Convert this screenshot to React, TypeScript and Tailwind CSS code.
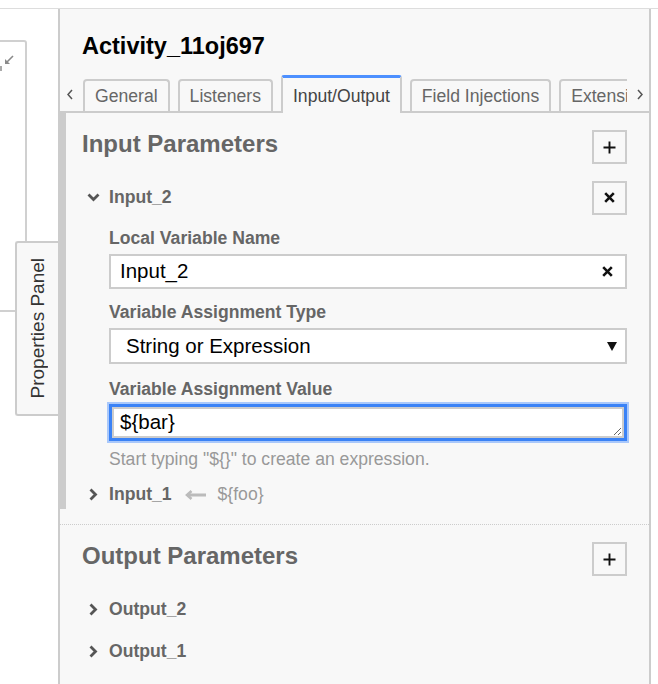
import React from "react";

const tabs = [
  { label: "General" },
  { label: "Listeners" },
  { label: "Input/Output", active: true },
  { label: "Field Injections" },
  { label: "Extensions" },
];

function ChevronDown() {
  return (
    <svg width="13" height="9" viewBox="0 0 13 9" fill="none">
      <polyline points="1.5,1.5 6.5,6.5 11.5,1.5" stroke="#555" strokeWidth="2.8" />
    </svg>
  );
}

function ChevronRight() {
  return (
    <svg width="9" height="13" viewBox="0 0 9 13" fill="none">
      <polyline points="1.5,1.5 6.5,6.5 1.5,11.5" stroke="#555" strokeWidth="2.8" />
    </svg>
  );
}

function CrossIcon() {
  return (
    <svg width="11" height="11" viewBox="0 0 11 11" fill="none">
      <path d="M1.2 1.2 L9.8 9.8 M9.8 1.2 L1.2 9.8" stroke="#111" strokeWidth="2.6" />
    </svg>
  );
}

function PlusIcon() {
  return (
    <svg width="13" height="13" viewBox="0 0 13 13" fill="none">
      <path d="M6.5 0.5 V12.5 M0.5 6.5 H12.5" stroke="#111" strokeWidth="1.9" />
    </svg>
  );
}

function SquareButton({ children }: { children: React.ReactNode }) {
  return (
    <button
      type="button"
      className="flex h-[34px] w-[35px] shrink-0 items-center justify-center border-2 border-[#ccc] bg-[#f8f8f8]"
    >
      {children}
    </button>
  );
}

function Tab({ label, active }: { label: string; active?: boolean }) {
  if (active) {
    return (
      <div className="relative z-10 -mb-[2px] h-[38px] shrink-0 whitespace-nowrap rounded-t-[3px] border-x-2 border-t-[3px] border-x-[#ccc] border-t-[#4d90ff] bg-[#f8f8f8] px-[10px] pt-[3px] text-[17.6px] leading-[30px] text-[#444]">
        {label}
      </div>
    );
  }
  return (
    <div className="h-[32px] shrink-0 whitespace-nowrap rounded-t-[4px] border-x-2 border-t-2 border-[#ccc] px-[10px] text-[17.6px] leading-[30px] text-[#666]">
      {label}
    </div>
  );
}

function FieldLabel({ children, className = "" }: { children: React.ReactNode; className?: string }) {
  return (
    <div className={`text-[17.6px] font-bold leading-[22px] text-[#666] ${className}`}>{children}</div>
  );
}

function CollapsedRow({ name, mapping }: { name: string; mapping?: string }) {
  return (
    <div className="flex h-[35px] items-center">
      <div className="w-[27px] pl-[7px]">
        <ChevronRight />
      </div>
      <span className="text-[17.6px] font-bold text-[#666]">{name}</span>
      {mapping && (
        <>
          <svg className="ml-[13px]" width="21" height="10" viewBox="0 0 21 10" fill="none">
            <path d="M3 5 H21" stroke="#bbb" strokeWidth="3" />
            <polyline points="6.5,1 2,5 6.5,9" stroke="#bbb" strokeWidth="2.6" />
          </svg>
          <span className="ml-[12px] text-[17.6px] text-[#999]">{mapping}</span>
        </>
      )}
    </div>
  );
}

export default function App() {
  return (
    <div className="h-[684px] w-[658px] overflow-hidden bg-white pt-[8px] font-['Liberation_Sans',Arial,sans-serif]">
      <div className="flex h-[676px] border-t border-[#ddd]">
        {/* diagram canvas edge */}
        <div className="relative w-[58px] shrink-0">
          <div className="absolute left-[-10px] top-[31px] h-[272px] w-[37px] rounded-tr-[3px] border-2 border-[#d0d0d0]" />
          <svg className="absolute left-[4px] top-[46px]" width="10" height="10" viewBox="0 0 10 10" fill="none">
            <path d="M9 1 L2.5 7.5" stroke="#8a8a8a" strokeWidth="1.6" />
            <polygon points="1,4 1,9 6,9" fill="#8a8a8a" />
          </svg>
          <div className="absolute left-0 top-[57px] h-[5px] w-[2px] bg-[#aaa]" />
          <div className="absolute left-[15px] top-[232px] flex h-[175px] w-[43px] items-center justify-center rounded-l-[3px] border-y-2 border-l-2 border-[#ccc] bg-[#f8f8f8]">
            <span className="rotate-180 whitespace-nowrap text-[19px] leading-[22px] text-[#333] [writing-mode:vertical-rl]">
              Properties Panel
            </span>
          </div>
        </div>

        {/* properties panel */}
        <div className="w-[593px] shrink-0 border-x-2 border-[#ccc] bg-[#f8f8f8]">
          <div className="pl-[22px] pt-[23px] text-[23.5px] font-bold leading-[28px] text-black">
            Activity_11oj697
          </div>

          <div className="mt-[15px] flex h-[38px] border-b-2 border-[#ccc]">
            <div className="w-[23px] shrink-0 pl-[7px] pt-[14px]">
              <svg width="6" height="11" viewBox="0 0 6 11" fill="none">
                <polyline points="5,1 1,5.5 5,10" stroke="#555" strokeWidth="1.5" />
              </svg>
            </div>
            <div className="flex w-[544px] shrink-0 items-end gap-[8px] overflow-x-clip">
              {tabs.map((t) => (
                <Tab key={t.label} label={t.label} active={t.active} />
              ))}
            </div>
            <div className="flex-1 pl-[10px] pt-[14px]">
              <svg width="6" height="11" viewBox="0 0 6 11" fill="none">
                <polyline points="1,1 5,5.5 1,10" stroke="#555" strokeWidth="1.5" />
              </svg>
            </div>
          </div>

          {/* input parameters */}
          <div className="relative border-b border-dotted border-[#ccc] px-[22px] pb-[12px] pt-[17px]">
            <div className="absolute bottom-[15px] left-0 top-0 w-[6px] bg-[#ccc]" />
            <div className="flex items-start justify-between">
              <div className="text-[24px] font-bold leading-[28px] text-[#666]">Input Parameters</div>
              <SquareButton>
                <PlusIcon />
              </SquareButton>
            </div>

            <div className="mt-[16px] flex h-[35px] items-center">
              <div className="w-[27px] pl-[5px]">
                <ChevronDown />
              </div>
              <span className="text-[17.6px] font-bold text-[#666]">Input_2</span>
              <div className="ml-auto">
                <SquareButton>
                  <CrossIcon />
                </SquareButton>
              </div>
            </div>

            <div className="pl-[27px]">
              <FieldLabel className="mt-[12px]">Local Variable Name</FieldLabel>
              <div className="mt-[5px] flex h-[35px] items-center justify-between border-2 border-[#ccc] bg-white pl-[9px] pr-[12px] text-[20.5px] text-black">
                <span>Input_2</span>
                <CrossIcon />
              </div>

              <FieldLabel className="mt-[12px]">Variable Assignment Type</FieldLabel>
              <div className="mt-[5px] flex h-[36px] items-center justify-between border-2 border-[#ccc] bg-white pl-[15px] pr-[8px] text-[20.5px] text-black">
                <span>String or Expression</span>
                <svg width="10" height="9" viewBox="0 0 10 9">
                  <polygon points="0,0 10,0 5,9" fill="#111" />
                </svg>
              </div>

              <FieldLabel className="mt-[14px]">Variable Assignment Value</FieldLabel>
              <textarea
                readOnly
                defaultValue="${bar}"
                className="mx-[3px] mt-[7px] block h-[31px] w-[512px] border-2 border-[#ccc] bg-white pl-[6px] pt-[2px] text-[20.5px] leading-[22px] text-black shadow-[0_0_0_3px_#3a82f6,0_0_0_5px_#a9c8fb] outline-none"
              />
              <div className="mt-[10px] text-[17.6px] leading-[22px] text-[#999]">
                Start typing "{"${}"}" to create an expression.
              </div>
            </div>

            <div className="mt-[7px]">
              <CollapsedRow name="Input_1" mapping="${foo}" />
            </div>
          </div>

          {/* output parameters */}
          <div className="px-[22px] pt-[17px]">
            <div className="flex items-start justify-between">
              <div className="text-[24px] font-bold leading-[28px] text-[#666]">Output Parameters</div>
              <SquareButton>
                <PlusIcon />
              </SquareButton>
            </div>
            <div className="mt-[16px]">
              <CollapsedRow name="Output_2" />
            </div>
            <div className="mt-[7px]">
              <CollapsedRow name="Output_1" />
            </div>
          </div>
        </div>
      </div>
    </div>
  );
}
